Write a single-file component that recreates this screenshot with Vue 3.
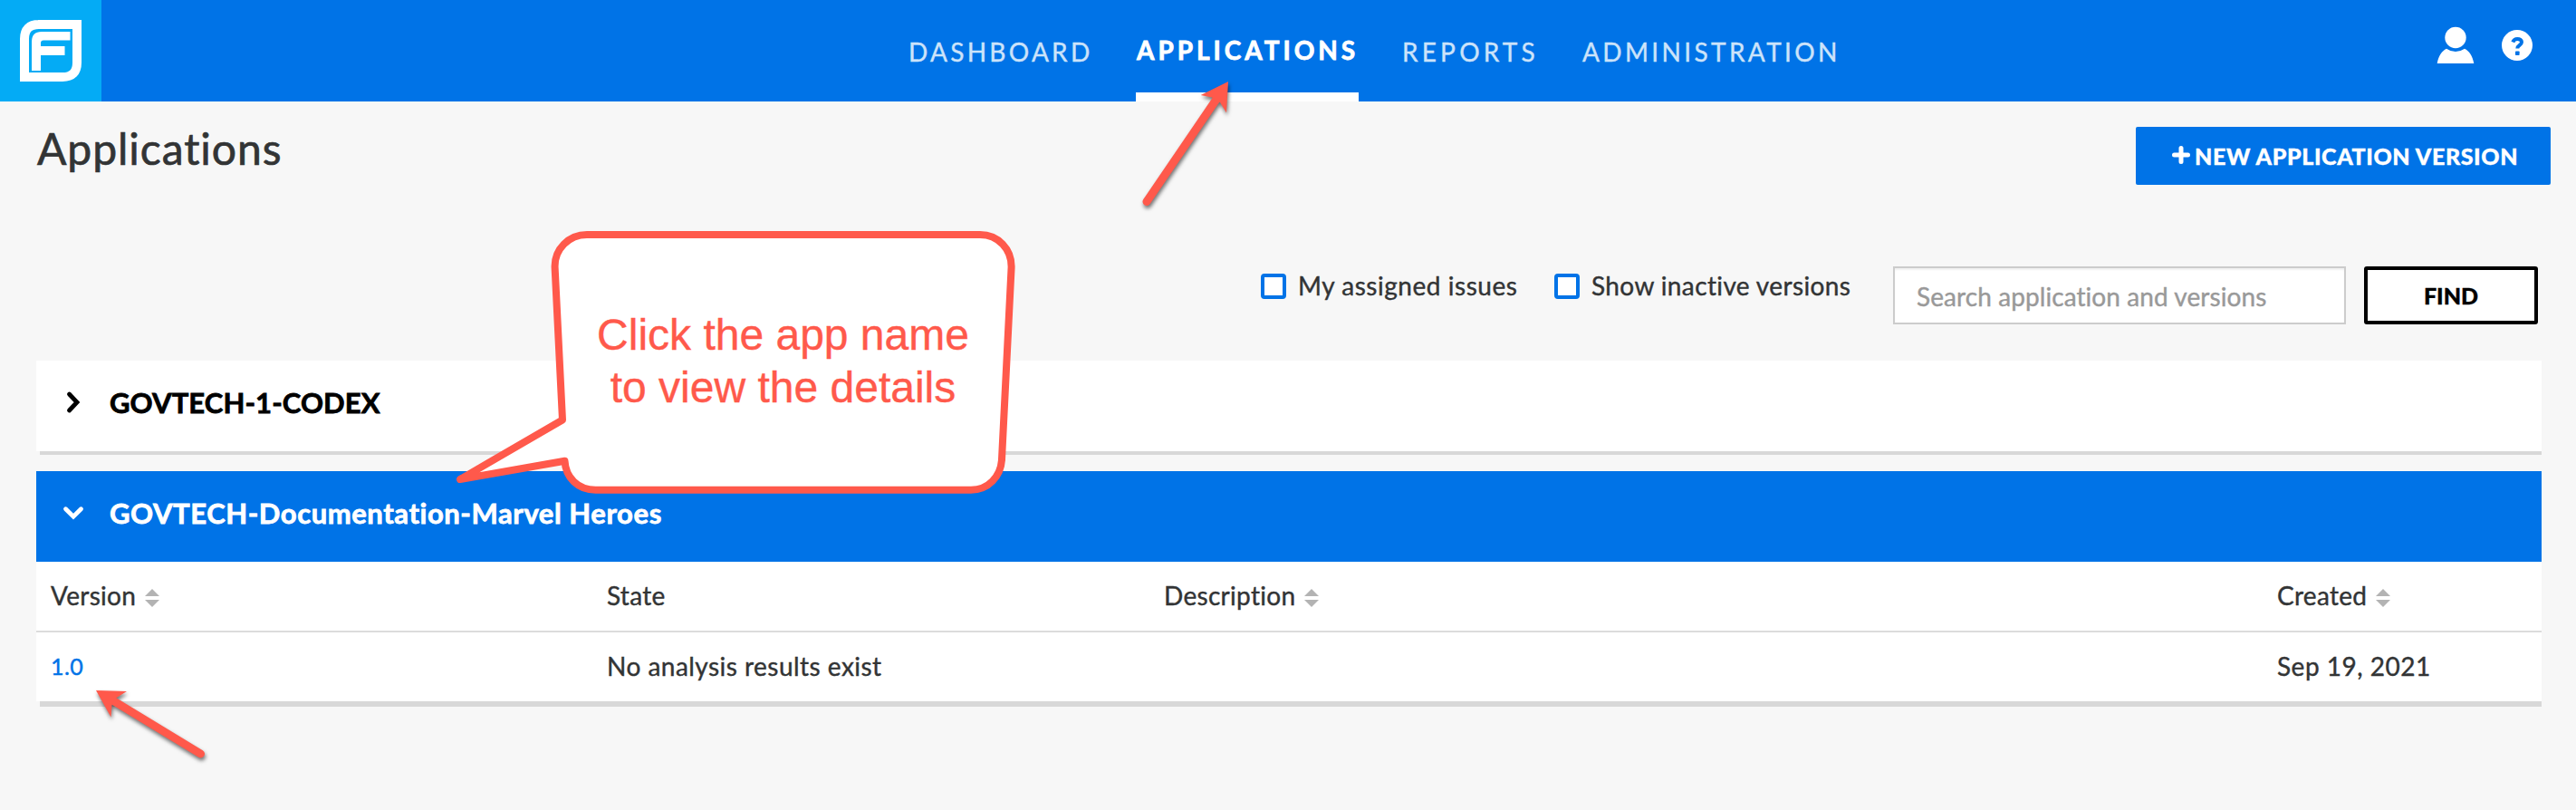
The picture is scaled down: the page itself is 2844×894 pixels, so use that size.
<script setup>
import { ref } from 'vue'

const nav = [
  { label: 'DASHBOARD', cls: 'dash' },
  { label: 'APPLICATIONS', cls: 'apps', active: true },
  { label: 'REPORTS', cls: 'reports' },
  { label: 'ADMINISTRATION', cls: 'admin' }
]
const columns = [
  { label: 'Version', sortable: true },
  { label: 'State', sortable: false },
  { label: 'Description', sortable: true },
  { label: 'Created', sortable: true }
]
const search = ref('')
</script>

<template>
  <div class="page">
    <header class="topbar">
      <div class="logo">
        <svg width="112" height="112" viewBox="0 0 112 112">
          <path fill="none" stroke="#fff" stroke-width="10" d="M42 27H85V69Q85 85 69 85H27V43Q27 27 43 27Z" />
          <path fill="#fff" d="M35 78V46Q35 35 46 35H77.500V44.500H48Q45 44.500 45 47.500V51H71.500V61H45V78Z" />
        </svg>
      </div>
      <nav class="nav">
        <a v-for="n in nav" :key="n.label" class="nav-item" :class="[n.cls, { active: n.active }]">{{ n.label }}</a>
      </nav>
      <div class="tools">
        <svg width="42" height="42" viewBox="0 0 42 42" fill="#fff">
          <circle cx="21" cy="12.500" r="11.700" />
          <path d="M0.700 41C2 33 6 27 11 24.700Q21 31.500 31 24.700C36 27 40 33 41.300 41Z" />
        </svg>
        <svg width="34" height="34" viewBox="0 0 34 34">
          <circle cx="17" cy="17" r="17" fill="#fff" />
          <path d="M12.300 13.500C13.200 10.900 15 9.900 17.300 9.900C20 9.900 22 11.300 22 13.500C22 17 17.300 16.800 17.300 20.500" fill="none" stroke="#0073e7" stroke-width="4" />
          <rect x="15" y="23.500" width="4.600" height="4.600" rx=".8" fill="#0073e7" />
        </svg>
      </div>
    </header>

    <section class="title-row">
      <h1>Applications</h1>
      <button class="new-btn">
        <svg width="20" height="20" viewBox="0 0 20 20"><path d="M10 2.500V17.500M2.500 10H17.500" stroke="#fff" stroke-width="5" stroke-linecap="round" /></svg>
        <span>NEW APPLICATION VERSION</span>
      </button>
    </section>

    <section class="filters">
      <label class="check mine"><i class="box"></i><span>My assigned issues</span></label>
      <label class="check inactive"><i class="box"></i><span>Show inactive versions</span></label>
      <input v-model="search" class="search" placeholder="Search application and versions" />
      <button class="find">FIND</button>
    </section>

    <main class="list">
      <div class="app closed">
        <svg class="chev" width="30" height="30" viewBox="0 0 30 30"><path d="M10.500 6L19 15L10.500 24" fill="none" stroke="#000" stroke-width="4.800" stroke-linecap="round" /></svg>
        <span>GOVTECH-1-CODEX</span>
      </div>
      <div class="app open">
        <svg class="chev" width="30" height="30" viewBox="0 0 30 30"><path d="M6.500 10.700L15 19.200L23.500 10.700" fill="none" stroke="#fff" stroke-width="4.800" stroke-linecap="round" /></svg>
        <span>GOVTECH-Documentation-Marvel Heroes</span>
      </div>
      <div class="grid head">
        <div v-for="c in columns" :key="c.label" class="cell">
          <span>{{ c.label }}</span>
          <svg v-if="c.sortable" class="sort" width="16" height="20" viewBox="0 0 16 20" fill="#b3b3b3"><path d="M8 0L16 8H0Z" /><path d="M0 12H16L8 20Z" /></svg>
        </div>
      </div>
      <div class="grid row">
        <div class="cell"><a class="version">1.0</a></div>
        <div class="cell result">No analysis results exist</div>
        <div class="cell"></div>
        <div class="cell date">Sep 19, 2021</div>
      </div>
      <div class="list-end"></div>
    </main>

    <svg class="notes" width="2844" height="894" viewBox="0 0 2844 894">
      <path class="bubble" d="M648 259H1082C1102 259 1117 275 1116.600 295L1106 507C1105 526 1091 540.700 1072 540.700H657.500C638 540.700 624.500 527 623.500 508.700L508 529L621 463.500L612.600 295C612 275 628 259 648 259Z" />
      <g class="arrow">
        <path d="M1266 222.500L1343 109.500" />
        <path class="tip" d="M1356 90L1325.700 105L1338 107.500L1347 113L1354 124.500Z" />
      </g>
      <g class="arrow">
        <path d="M221.500 832L126 774" />
        <path class="tip" d="M106 762L140 763L128 770.500L123.500 778L122.500 791.500Z" />
      </g>
    </svg>
    <p class="callout">Click the app name<br />to view the details</p>
  </div>
</template>

<style>
body { background: #f7f7f7; }
</style>

<style scoped>
.page {
  position: relative;
  width: 2844px;
  height: 894px;
  overflow: hidden;
  background: #f7f7f7;
  color: #323435;
  font: 28px/1.2 Lato, "Open Sans", sans-serif;
  letter-spacing: .35px;
  -webkit-text-stroke-width: .4px;
}
button, input { font-family: inherit; box-sizing: border-box; margin: 0; padding: 0; }
svg { display: block; flex: none; }
.topbar { display: flex; height: 112px; background: #0073e7; }
.logo { width: 112px; background: #04abf5; }
.nav {
  display: grid;
  grid-template-columns: 203px 246px 151px 300px;
  column-gap: 48px;
  margin-left: 891px;
}
.nav-item { box-sizing: border-box; height: 112px; line-height: 114px; color: #cce3fa; white-space: nowrap; }
.dash { letter-spacing: 3.27px; }
.apps { letter-spacing: 3.96px; padding-left: 1px; -webkit-text-stroke-width: .8px; }
.reports { letter-spacing: 4.2px; }
.admin { letter-spacing: 3.36px; }
.nav-item.active { color: #fff; font-weight: 700; line-height: 110px; border-bottom: 10px solid #fff; }
.tools { display: flex; align-items: flex-start; gap: 30px; margin-left: auto; padding: 29px 48px 0 0; }
.tools svg + svg { margin-top: 4px; }

.title-row { display: flex; justify-content: space-between; align-items: flex-start; height: 182px; padding: 0 28px 0 41px; }
h1 { margin: 0; font-size: 48px; line-height: 103px; font-weight: 400; letter-spacing: .95px; -webkit-text-stroke-width: .7px; }
.new-btn {
  display: flex;
  align-items: center;
  gap: 5px;
  width: 458px;
  height: 64px;
  margin-top: 28px;
  padding-left: 40px;
  border: 0;
  border-radius: 2px;
  background: #0073e7;
  color: #fff;
  font-size: 25px;
  font-weight: 900;
  letter-spacing: .6px;
  white-space: nowrap;
}
.new-btn svg { margin-top: -2px; }

.filters { display: flex; align-items: flex-start; height: 104px; padding-left: 1392px; }
.check { display: flex; align-items: center; gap: 13px; height: 44px; white-space: nowrap; }
.check span { padding-bottom: 1px; }
.mine { width: 324px; letter-spacing: .54px; }
.inactive { width: 374px; letter-spacing: .38px; }
.box { box-sizing: border-box; width: 28px; height: 28px; border: 4px solid #0073e7; border-radius: 4px; background: #fff; }
.search {
  width: 500px;
  height: 64px;
  padding: 2px 0 0 24px;
  border: 2px solid #ccc;
  background: #fff;
  box-shadow: inset 0 2px 2px rgba(0, 0, 0, .06);
  font-size: 28px;
  letter-spacing: .08px;
  font-variant-ligatures: none;
}
.search::placeholder { color: #999; opacity: 1; }
.find {
  width: 192px;
  height: 64px;
  margin-left: 20px;
  border: 4px solid #000;
  border-radius: 3px;
  background: #fff;
  color: #000;
  font-size: 25px;
  font-weight: 900;
  letter-spacing: 0;
}

.list { width: 2766px; margin-left: 40px; }
.app { display: flex; height: 100px; padding-left: 26px; font-size: 31px; font-weight: 700; line-height: 92px; white-space: nowrap; -webkit-text-stroke-width: .8px; }
.app .chev { margin: 31px 25px 0 0; }
.closed { background: #fff; color: #000; letter-spacing: .1px; margin-bottom: 22px; position: relative; }
.closed::after { content: ""; position: absolute; left: 4px; right: 0; top: 100px; height: 4px; background: #d8d8d8; }
.open { background: #0073e7; color: #fff; letter-spacing: .57px; }
.grid { display: grid; grid-template-columns: 614px 615px 1229px 292px; height: 76px; padding-left: 16px; background: #fff; }
.cell { display: flex; align-items: baseline; line-height: 74px; white-space: nowrap; }
.head { border-bottom: 2px solid #dcdcdc; letter-spacing: .3px; }
.head .cell { align-items: flex-start; line-height: 75px; }
.sort { margin: 30px 0 0 10px; }
.version { color: #0073e7; font-size: 25px; letter-spacing: .4px; }
.result { letter-spacing: .47px; }
.date { letter-spacing: .5px; }
.list-end { height: 6px; margin-left: 4px; background: #d8d8d8; }

.notes { position: absolute; left: 0; top: 0; }
.bubble { fill: #fff; stroke: #ff594b; stroke-width: 8; stroke-linejoin: round; }
.arrow { filter: drop-shadow(1px 3px 2px rgba(0, 0, 0, .55)); }
.arrow path { fill: none; stroke: #ff594b; stroke-width: 9; stroke-linecap: round; }
.arrow .tip { fill: #ff594b; stroke: none; }
.callout {
  position: absolute;
  left: 628px;
  top: 341px;
  width: 473px;
  margin: 0;
  color: #ff594b;
  font: 48px/58px "Liberation Sans", Arial, sans-serif;
  letter-spacing: 0;
  text-align: center;
}
</style>
